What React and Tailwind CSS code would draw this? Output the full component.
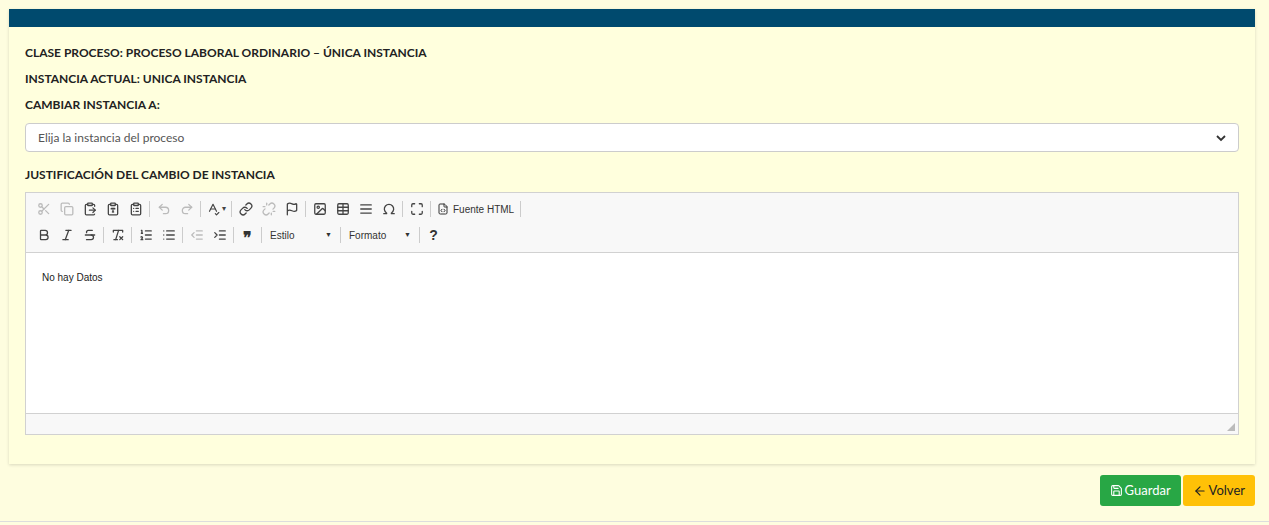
import React from "react";
import { Scissors, Copy, ClipboardPaste, ClipboardType, ClipboardList, Undo2, Redo2, SpellCheck, Link, Unlink, Flag, Image, Table, AlignJustify, Omega, Maximize, FileCode, Bold, Italic, Strikethrough, RemoveFormatting, ListOrdered, List, IndentDecrease, IndentIncrease, Quote, HelpCircle, Save, ArrowLeft } from "lucide-react";

const Ic = ({ I, dim }) => (
  <span className={"w-[23px] h-[22px] flex items-center justify-center " + (dim ? "text-[#bbb]" : "text-[#444]")}>
    <I size={14} strokeWidth={2.2} />
  </span>
);
const Sep = () => <span className="w-px h-[16px] bg-[#ccc] mx-[2px]" />;

export default function App() {
  return (
    <div className="w-[1269px] h-[525px] bg-[#fefddf] relative" style={{ fontFamily: "Lato, 'Liberation Sans', sans-serif" }}>
      <div className="pt-[9px] px-[9px] pr-[14px]">
        <div className="bg-[#ffffdd] shadow-[0_1px_3px_rgba(0,0,0,0.15)] h-[455px]">
          <div className="h-[18px] bg-[#004a6e]" />
          <div className="px-[16px] pt-[18px] text-[12px] font-bold text-[#222]">
            <div className="h-[16px] leading-[16px]">CLASE PROCESO: PROCESO LABORAL ORDINARIO – ÚNICA INSTANCIA</div>
            <div className="h-[16px] leading-[16px] mt-[10px]">INSTANCIA ACTUAL: UNICA INSTANCIA</div>
            <div className="h-[16px] leading-[16px] mt-[10px]">CAMBIAR INSTANCIA A:</div>
            <div className="mt-[10px] h-[29px] bg-white border border-[#ccc] rounded-[4px] flex items-center justify-between px-[12px] font-normal text-[#555]">
              <span className="text-[12px]">Elija la instancia del proceso</span>
              <svg width="10" height="8" viewBox="0 0 10 8"><path d="M1 2l4 4 4-4" stroke="#333" strokeWidth="1.8" fill="none" /></svg>
            </div>
            <div className="h-[16px] leading-[16px] mt-[15px]">JUSTIFICACIÓN DEL CAMBIO DE INSTANCIA</div>
            <div className="mt-[9px] border border-[#d1d1d1] bg-white font-normal" style={{ fontFamily: "Arial, 'Liberation Sans', sans-serif" }}>
              <div className="bg-[#f8f8f8] border-b border-[#d1d1d1] px-[6px] pt-[4px] pb-[5px] h-[60px]">
                <div className="flex items-center h-[24px]">
                  <Ic I={Scissors} dim /><Ic I={Copy} dim /><Ic I={ClipboardPaste} /><Ic I={ClipboardType} /><Ic I={ClipboardList} /><Sep />
                  <Ic I={Undo2} dim /><Ic I={Redo2} dim /><Sep />
                  <span className="flex items-center text-[#444] px-[3px]"><SpellCheck size={14} /><span className="text-[8px] ml-[2px]">▾</span></span><Sep />
                  <Ic I={Link} /><Ic I={Unlink} dim /><Ic I={Flag} /><Sep />
                  <Ic I={Image} /><Ic I={Table} /><Ic I={AlignJustify} /><Ic I={Omega} /><Sep />
                  <Ic I={Maximize} /><Sep />
                  <span className="flex items-center text-[#333] text-[10px] px-[4px] gap-[4px]"><FileCode size={12} />Fuente HTML</span><Sep />
                </div>
                <div className="flex items-center h-[24px] mt-[2px]">
                  <Ic I={Bold} /><Ic I={Italic} /><Ic I={Strikethrough} /><Sep />
                  <Ic I={RemoveFormatting} /><Sep />
                  <Ic I={ListOrdered} /><Ic I={List} /><Sep />
                  <Ic I={IndentDecrease} dim /><Ic I={IndentIncrease} /><Sep />
                  <span className="w-[23px] flex justify-center text-[#333] font-bold text-[16px] leading-none pt-[5px]">❞</span><Sep />
                  <span className="w-[74px] flex justify-between items-center text-[10px] text-[#333] px-[6px]">Estilo<span className="text-[7px]">▼</span></span><Sep />
                  <span className="w-[74px] flex justify-between items-center text-[10px] text-[#333] px-[6px]">Formato<span className="text-[7px]">▼</span></span><Sep />
                  <span className="w-[23px] flex justify-center text-[#333] font-bold text-[14px]">?</span>
                </div>
              </div>
              <div className="h-[160px] px-[16px] pt-[17px] text-[10px] text-[#222]">No hay Datos</div>
              <div className="h-[21px] bg-[#f8f8f8] border-t border-[#d1d1d1] flex justify-end items-end p-[3px]">
                <svg width="8" height="8"><path d="M8 0L8 8L0 8Z" fill="#bbb" /></svg>
              </div>
            </div>
          </div>
        </div>
      </div>
      <div className="flex justify-end gap-[2px] pr-[14px] mt-[11px]">
        <button className="h-[31px] px-[10px] bg-[#28a745] text-white rounded-[3px] text-[13px] flex items-center gap-[2px]"><Save size={13} />Guardar</button>
        <button className="h-[31px] px-[10px] bg-[#ffc107] text-[#222] rounded-[3px] text-[13px] flex items-center gap-[2px]"><ArrowLeft size={14} />Volver</button>
      </div>
      <div className="absolute bottom-[3px] left-0 right-0 h-px bg-[#ddd]" />
    </div>
  );
}
